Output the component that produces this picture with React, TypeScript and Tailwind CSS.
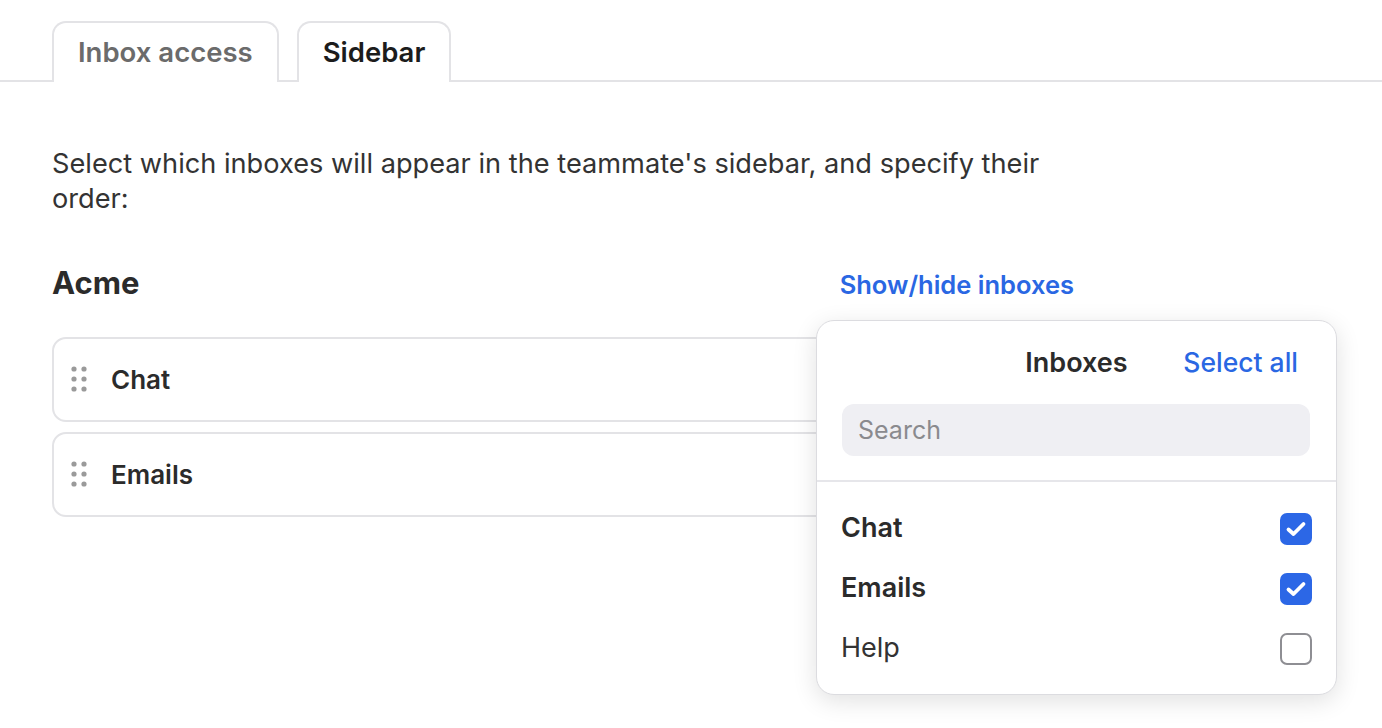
import { useState } from "react";

type Inbox = { id: string; name: string; visible: boolean };

const DragHandle = () => (
  <svg width="16" height="26" viewBox="0 0 16 26" className="shrink-0">
    {[3, 13, 23].map((cy) => (
      <g key={cy}>
        <circle cx="3" cy={cy} r="2.6" fill="#9a9a9a" />
        <circle cx="13" cy={cy} r="2.6" fill="#9a9a9a" />
      </g>
    ))}
  </svg>
);

const Checkbox = ({ checked, onClick }: { checked: boolean; onClick: () => void }) => (
  <button
    onClick={onClick}
    className={
      checked
        ? "flex h-[32px] w-[32px] items-center justify-center rounded-[7px] bg-[#2c67e6]"
        : "flex h-[32px] w-[32px] items-center justify-center rounded-[7px] border-2 border-[#8e8e93] bg-white"
    }
  >
    {checked && (
      <svg width="22" height="18" viewBox="0 0 22 18">
        <path
          d="M3.5 9.5 L8.5 14 L18.5 4"
          fill="none"
          stroke="white"
          strokeWidth="3.8"
          strokeLinecap="round"
          strokeLinejoin="round"
        />
      </svg>
    )}
  </button>
);

const App = () => {
  const [inboxes, setInboxes] = useState<Inbox[]>([
    { id: "chat", name: "Chat", visible: true },
    { id: "emails", name: "Emails", visible: true },
    { id: "help", name: "Help", visible: false },
  ]);

  const toggle = (id: string) =>
    setInboxes((cur) => cur.map((i) => (i.id === id ? { ...i, visible: !i.visible } : i)));

  return (
    <div className="min-h-screen bg-white font-['Inter','Noto_Sans',sans-serif] text-[#333]">
      {/* Tabs */}
      <div className="flex h-[82px] items-end gap-[18px] border-b-2 border-[#e3e3e6] pl-[52px]">
        <button className="-mb-[2px] h-[61px] rounded-t-[14px] border-2 border-b-0 border-[#e3e3e6] bg-white px-[24px] text-[27.5px] font-semibold text-[#6b6b6b]">
          Inbox access
        </button>
        <button className="-mb-[2px] h-[61px] rounded-t-[14px] border-2 border-b-0 border-[#e3e3e6] bg-white px-[24px] text-[27.5px] font-semibold text-[#1c1c1c]">
          Sidebar
        </button>
      </div>

      <div className="w-[1074px] pl-[52px] pt-[64px]">
        <p className="text-[27.2px] leading-[35px] text-[#333]">
          Select which inboxes will appear in the teammate's sidebar, and specify their order:
        </p>

        <div className="relative mt-[44px] flex items-center justify-between">
          <h2 className="text-[31px] font-bold text-[#2b2b2b]">Acme</h2>
          <button className="mt-[4px] text-[25.5px] font-semibold text-[#2a67e3]">Show/hide inboxes</button>

          {/* Dropdown */}
          <div className="absolute right-[-263px] top-[60px] z-10 w-[521px] rounded-[18px] border border-[#dcdce0] bg-white shadow-[0_6px_24px_rgba(0,0,0,0.12)]">
            <div className="px-[25px] pt-[22px]">
              <div className="grid grid-cols-[1fr_auto_1fr] items-center">
                <span />
                <span className="text-[27px] font-semibold text-[#2b2b2b]">Inboxes</span>
                <button className="justify-self-end pr-[13px] text-[26.5px] font-medium text-[#2a67e3]">
                  Select all
                </button>
              </div>
              <input
                placeholder="Search"
                className="mt-[20px] h-[52px] w-[468px] rounded-[12px] bg-[#efeff3] px-[16px] text-[25px] text-[#333] outline-none placeholder:text-[#8a8a8e]"
              />
            </div>
            <div className="mt-[24px] border-t-2 border-[#e6e6ea] px-[24px] pb-[15px] pt-[17px]">
              {inboxes.map((inbox) => (
                <div key={inbox.id} className="flex h-[60px] items-center justify-between">
                  <span
                    className={
                      inbox.visible
                        ? "text-[27px] font-semibold text-[#2b2b2b]"
                        : "text-[27px] text-[#333]"
                    }
                  >
                    {inbox.name}
                  </span>
                  <Checkbox checked={inbox.visible} onClick={() => toggle(inbox.id)} />
                </div>
              ))}
            </div>
          </div>
        </div>

        <div className="mt-[30px] flex flex-col gap-[10px]">
          {inboxes
            .filter((i) => i.visible)
            .map((inbox) => (
              <div
                key={inbox.id}
                className="flex h-[85px] items-center gap-[24px] rounded-[14px] border-2 border-[#e3e3e6] pl-[17px]"
              >
                <DragHandle />
                <span className="text-[26px] font-semibold text-[#2b2b2b]">{inbox.name}</span>
              </div>
            ))}
        </div>
      </div>
    </div>
  );
};

export default App;
